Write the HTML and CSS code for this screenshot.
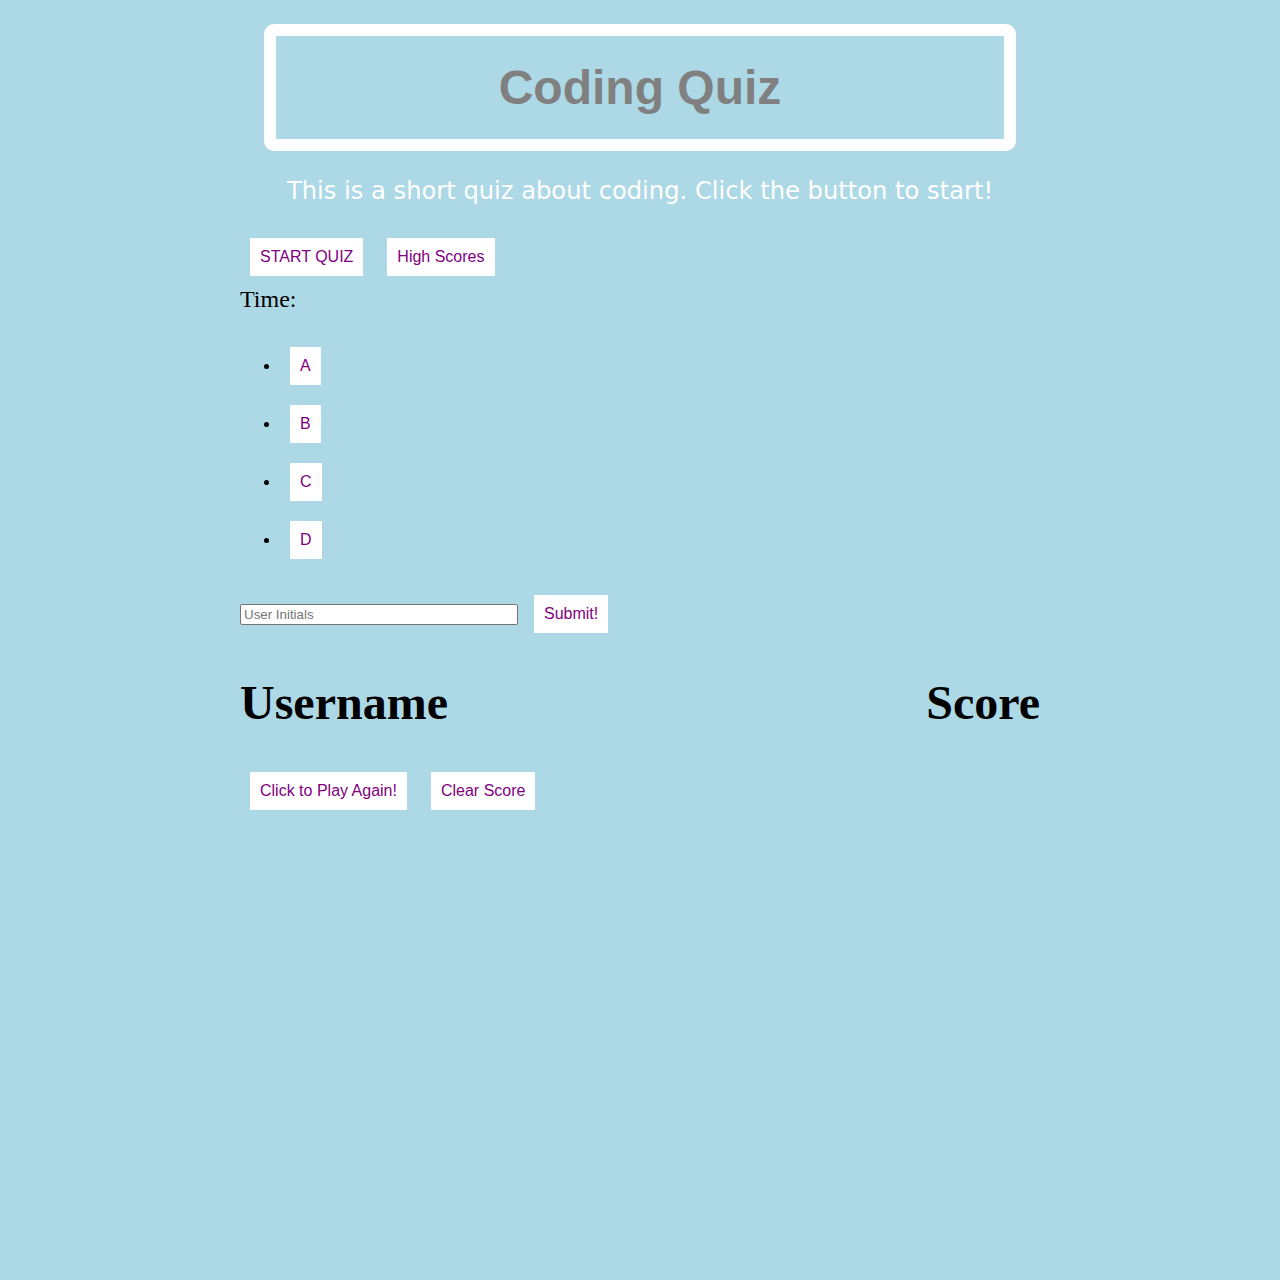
FILE: index.html
```html
<!DOCTYPE html>
<html lang="en">
<head>
<meta charset="utf-8">
<title>Coding Quiz</title>
<link rel="stylesheet" href="styles.css">
</head>
<body>
<main class="page">
  <header class="banner">
    <h1 class="banner-title">Coding Quiz</h1>
  </header>
  <p class="intro">This is a short quiz about coding. Click the button to start!</p>
  <div class="btn-row">
    <button class="btn">START QUIZ</button>
    <button class="btn">High Scores</button>
  </div>
  <div class="timer">Time:</div>
  <ul class="answers">
    <li><button class="btn">A</button></li>
    <li><button class="btn">B</button></li>
    <li><button class="btn">C</button></li>
    <li><button class="btn">D</button></li>
  </ul>
  <div class="submit-row">
    <input class="initials" type="text" placeholder="User Initials">
    <button class="btn">Submit!</button>
  </div>
  <div class="score-head">
    <span>Username</span>
    <span>Score</span>
  </div>
  <div class="btn-row">
    <button class="btn">Click to Play Again!</button>
    <button class="btn">Clear Score</button>
  </div>
</main>
</body>
</html>
```
FILE: styles.css
```css
html, body {
  margin: 0;
  padding: 0;
  background: #add8e6;
}
body {
  font-family: "Liberation Serif", "Times New Roman", serif;
  font-size: 16px;
  color: #000;
}
.page {
  width: 800px;
  margin: 0 auto;
  padding-top: 24px;
}
.banner {
  margin: 0 24px;
  border: 12px solid #fff;
  border-radius: 10px;
  padding: 24px 0;
  text-align: center;
}
.banner-title {
  margin: 0;
  font-family: "Liberation Sans", Arial, sans-serif;
  font-weight: bold;
  font-size: 48px;
  line-height: 55px;
  color: #808080;
}
.intro {
  margin: 26px 0 23px;
  text-align: center;
  font-family: "DejaVu Sans", Verdana, sans-serif;
  font-size: 24.2px;
  line-height: 28px;
  color: #fff;
}
.btn-row {
  display: flex;
  gap: 24px;
  padding: 10px;
}
.btn {
  background: #fff;
  border: none;
  padding: 10px;
  margin: 0;
  font-family: "Liberation Sans", Arial, sans-serif;
  font-size: 16px;
  line-height: 18px;
  color: #800080;
  cursor: pointer;
}
.timer {
  font-size: 24px;
  line-height: 27px;
}
.answers {
  margin: 24px 0 16px;
  padding-left: 40px;
}
.answers li {
  padding: 10px;
  height: 38px;
  line-height: 38px;
}
.answers .btn {
  display: inline-block;
  vertical-align: top;
}
.submit-row {
  display: flex;
  align-items: center;
  gap: 16px;
  padding: 10px 0;
}
.initials {
  box-sizing: border-box;
  width: 278px;
  height: 21px;
  margin: 0;
  padding: 1px 3px;
  border: 1px solid #767676;
  border-radius: 2px;
  background: #fff;
  font-family: "Liberation Sans", Arial, sans-serif;
  font-size: 13.33px;
}
.initials::placeholder {
  color: #757575;
}
.score-head {
  display: flex;
  justify-content: space-between;
  margin: 32px 0;
  font-size: 48px;
  font-weight: bold;
  line-height: 55px;
}
```
